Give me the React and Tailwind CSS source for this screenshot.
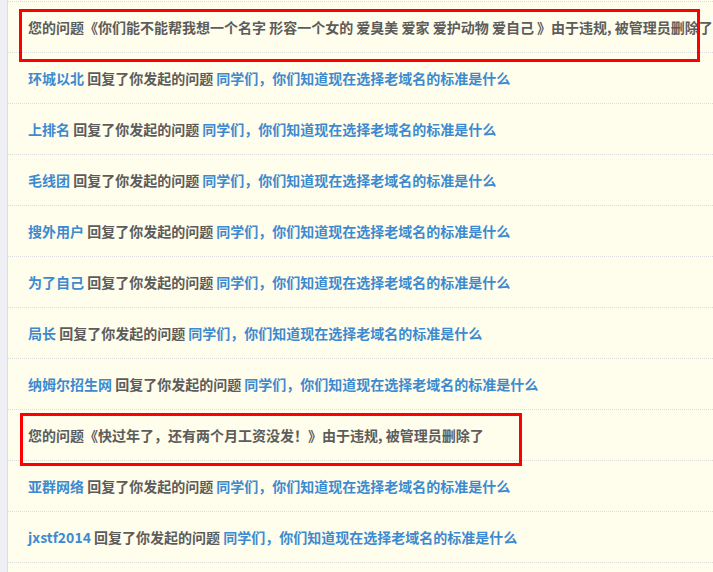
const linkTitle = '同学们，你们知道现在选择老域名的标准是什么'

const rows = [
  { type: 'notice', text: '您的问题《你们能不能帮我想一个名字 形容一个女的 爱臭美 爱家 爱护动物 爱自己 》由于违规, 被管理员删除了' },
  { type: 'reply', user: '环城以北' },
  { type: 'reply', user: '上排名' },
  { type: 'reply', user: '毛线团' },
  { type: 'reply', user: '搜外用户' },
  { type: 'reply', user: '为了自己' },
  { type: 'reply', user: '局长' },
  { type: 'reply', user: '纳姆尔招生网' },
  { type: 'notice', text: '您的问题《快过年了，还有两个月工资没发！》由于违规, 被管理员删除了' },
  { type: 'reply', user: '亚群网络' },
  { type: 'reply', user: 'jxstf2014' },
]

function Row({ row }) {
  return (
    <li className="h-[51px] border-t border-dotted border-[#dcdcdc] flex items-center pl-[20px] whitespace-pre overflow-hidden">
      {row.type === 'notice' ? (
        <span className="text-[#5c5c5c]">{row.text}</span>
      ) : (
        <span>
          <a className="text-[#3d8ad0]">{row.user}</a>
          <span className="text-[#5c5c5c]">{' 回复了你发起的问题 '}</span>
          <a className="text-[#3d8ad0]">{linkTitle}</a>
        </span>
      )}
    </li>
  )
}

export default function App() {
  return (
    <div
      className="w-[713px] h-[572px] overflow-hidden flex bg-[#fffdeb]"
      style={{ fontFamily: '"Noto Sans CJK SC", "Liberation Sans", sans-serif' }}
    >
      <div className="w-[8px] shrink-0 bg-[#eef0f5] border-r border-[#d6dee9]" />
      <div className="relative flex-1 pt-[1px]">
        <ul className="text-[14px] font-bold border-b border-dotted border-[#dcdcdc]">
          {rows.map((row, i) => (
            <Row key={i} row={row} />
          ))}
        </ul>
        <div className="absolute left-[11px] top-[9px] w-[681px] h-[53px] border-[3px] border-[#ff0000] pointer-events-none" />
        <div className="absolute left-[12px] top-[413px] w-[502px] h-[53px] border-[3px] border-[#ff0000] pointer-events-none" />
      </div>
    </div>
  )
}
